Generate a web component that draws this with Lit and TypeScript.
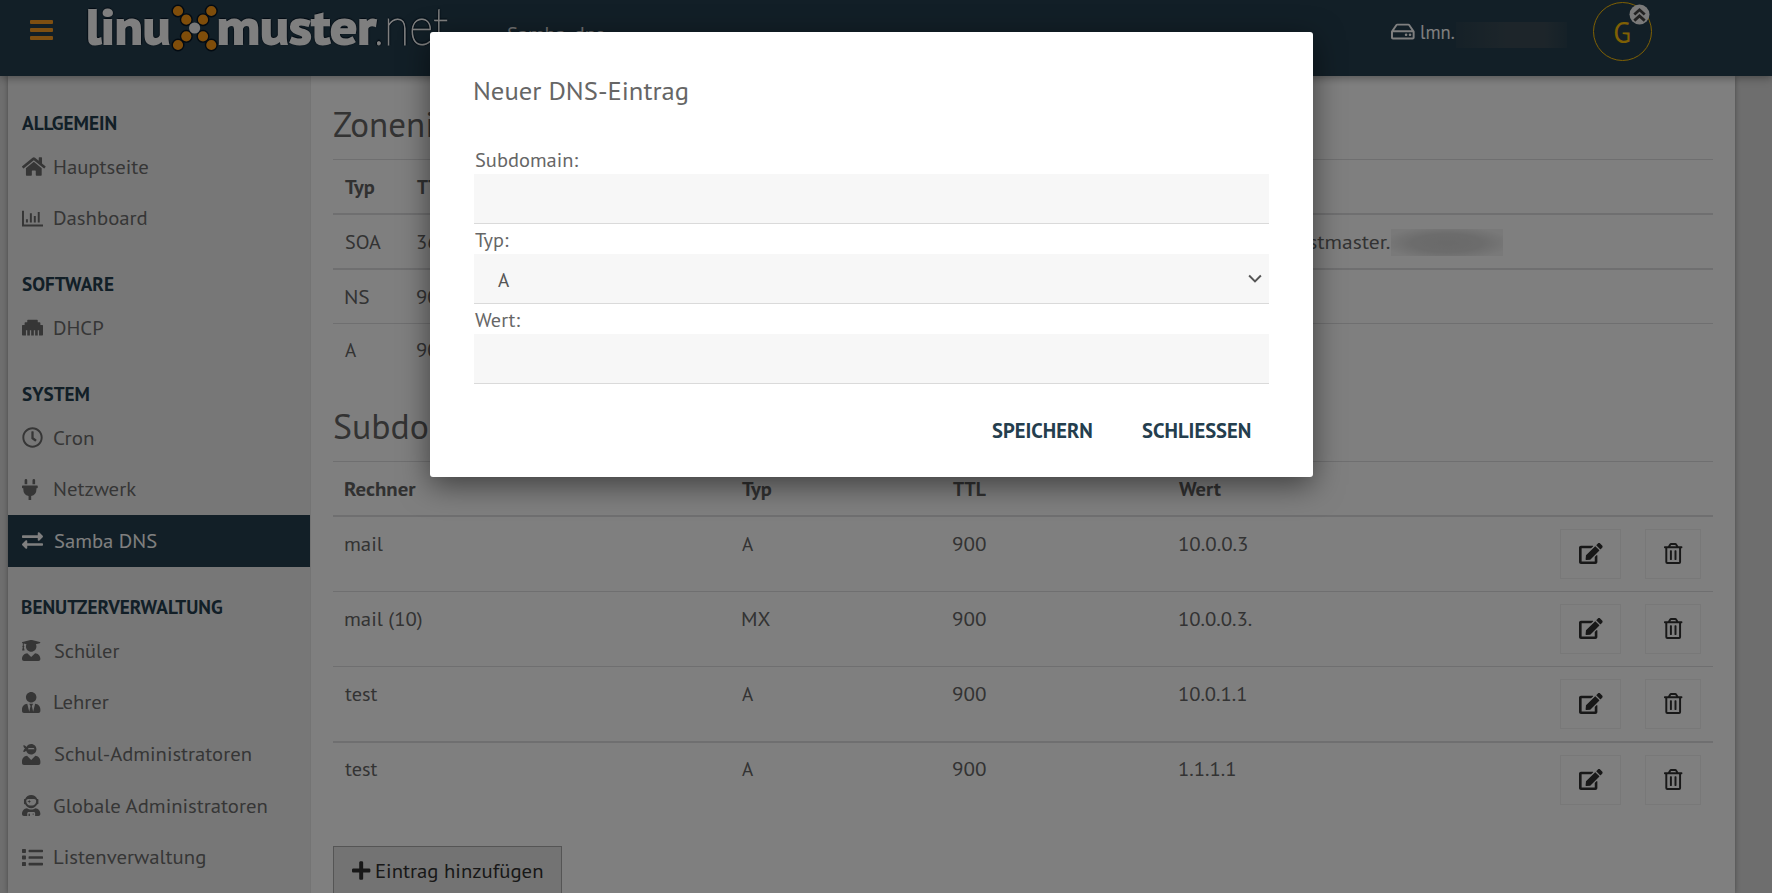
import { LitElement, html, css, svg } from "lit";
import { customElement, property } from "lit/decorators.js";
import { classMap } from "lit/directives/class-map.js";

const user = "0 0 448 512";
const ICONS: Record<string, [string, string]> = {
  home: ["0 0 576 512", "M280.37 148.26L96 300.11V464a16 16 0 0 0 16 16l112.06-.29a16 16 0 0 0 15.92-16V368a16 16 0 0 1 16-16h64a16 16 0 0 1 16 16v95.64a16 16 0 0 0 16 16.05L464 480a16 16 0 0 0 16-16V300L295.67 148.26a12.19 12.19 0 0 0-15.3 0zM571.6 251.47L488 182.56V44.05a12 12 0 0 0-12-12h-56a12 12 0 0 0-12 12v72.61L318.47 43a48 48 0 0 0-61 0L4.34 251.47a12 12 0 0 0-1.6 16.9l25.5 31A12 12 0 0 0 45.15 301l235.22-193.74a12.19 12.19 0 0 1 15.3 0L530.9 301a12 12 0 0 0 16.9-1.6l25.5-31a12 12 0 0 0-1.7-16.93z"],
  chart: ["0 0 512 512", "M0 64h48v336h464v48H0zM96 272h48v80H96zM192 128h48v224h-48zM288 192h48v160h-48zM384 96h48v256h-48z"],
  ethernet: ["0 0 512 512", "M496 192h-48v-48c0-8.8-7.2-16-16-16h-48V80c0-8.8-7.2-16-16-16H144c-8.8 0-16 7.2-16 16v48H80c-8.8 0-16 7.2-16 16v48H16c-8.8 0-16 7.2-16 16v224c0 8.8 7.2 16 16 16h80V320h32v128h64V320h32v128h64V320h32v128h64V320h32v128h80c8.8 0 16-7.2 16-16V208c0-8.8-7.2-16-16-16z"],
  clock: ["0 0 512 512", "M256 8C119 8 8 119 8 256s111 248 248 248 248-111 248-248S393 8 256 8zm0 448c-110.5 0-200-89.5-200-200S145.5 56 256 56s200 89.5 200 200-89.5 200-200 200zm61.8-104.4l-84.9-61.7c-3.1-2.3-4.9-5.9-4.9-9.7V116c0-6.6 5.4-12 12-12h32c6.6 0 12 5.4 12 12v141.7l66.8 48.6c5.4 3.9 6.5 11.4 2.6 16.8L334.6 349c-3.9 5.3-11.4 6.5-16.8 2.6z"],
  plug: ["0 0 384 512", "M320 32a32 32 0 0 0-64 0v96h64zm48 128H16a16 16 0 0 0-16 16v32a16 16 0 0 0 16 16h16v32a160.07 160.07 0 0 0 128 156.8V512h64v-99.2A160.07 160.07 0 0 0 352 256v-32h16a16 16 0 0 0 16-16v-32a16 16 0 0 0-16-16zM128 32a32 32 0 0 0-64 0v96h64z"],
  exchange: ["0 0 512 512", "M0 168v-16c0-13.255 10.745-24 24-24h360V80c0-21.367 25.899-32.042 40.971-16.971l80 80c9.372 9.373 9.372 24.569 0 33.941l-80 80C409.956 271.982 384 261.456 384 240v-48H24c-13.255 0-24-10.745-24-24zm488 152H128v-48c0-21.314-25.862-32.08-40.971-16.971l-80 80c-9.372 9.373-9.372 24.569 0 33.941l80 80C102.057 463.997 128 453.437 128 432v-48h360c13.255 0 24-10.745 24-24v-16c0-13.255-10.745-24-24-24z"],
  graduate: [user, "M319.4 320.6L224 416l-95.4-95.4C57.1 323.7 0 382.2 0 454.4v9.6c0 26.5 21.5 48 48 48h352c26.5 0 48-21.5 48-48v-9.6c0-72.2-57.1-130.7-128.6-133.8zM13.6 79.8l6.4 1.5v58.4c-7 4.2-12 11.5-12 20.3 0 8.4 4.6 15.4 11.1 19.7L3.5 242c-1.7 6.9 2.1 14 7.6 14h41.8c5.5 0 9.3-7.1 7.6-14l-15.6-62.3C51.4 175.4 56 168.4 56 160c0-8.8-5-16.1-12-20.3V87.1l66 15.9c-8.6 17.2-14 36.4-14 57 0 70.7 57.3 128 128 128s128-57.3 128-128c0-20.6-5.3-39.8-14-57l96.3-23.2c18.2-4.4 18.2-27.1 0-31.5l-190.4-46c-13-3.1-26.7-3.1-39.7 0L13.6 48.2c-18.1 4.4-18.1 27.2 0 31.6z"],
  tie: [user, "M224 256c70.7 0 128-57.3 128-128S294.7 0 224 0 96 57.3 96 128s57.3 128 128 128zm95.8 32.6L272 480l-32-136 32-56h-96l32 56-32 136-47.8-191.4C56.9 292 0 350.3 0 422.4V464c0 26.5 21.5 48 48 48h352c26.5 0 48-21.5 48-48v-41.6c0-72.1-56.9-130.4-128.2-133.8z"],
  ninja: [user, "M325.4 289.2L224 390.6 122.6 289.2C54 295.3 0 352.2 0 422.4V464c0 26.5 21.5 48 48 48h352c26.5 0 48-21.5 48-48v-41.6c0-70.2-54-127.1-122.6-133.2zM32 192c27.3 0 51.8-11.5 69.2-29.7 15.1 53.9 64 93.7 122.8 93.7 70.7 0 128-57.3 128-128S294.7 0 224 0c-50.4 0-93.6 29.4-114.5 71.8C92.1 47.8 64 32 32 32c0 33.4 17.1 62.8 43.1 80-26 17.2-43.1 46.6-43.1 80zm144-96h96c17.7 0 32 14.3 32 32H144c0-17.7 14.3-32 32-32z"],
  astronaut: [user, "M64 224h13.5c24.7 56.5 80.9 96 146.5 96s121.8-39.5 146.5-96H384c8.8 0 16-7.2 16-16v-96c0-8.8-7.2-16-16-16h-13.5C345.8 39.5 289.6 0 224 0S102.2 39.5 77.5 96H64c-8.8 0-16 7.2-16 16v96c0 8.8 7.2 16 16 16zm40-88c0-22.1 21.5-40 48-40h144c26.5 0 48 17.9 48 40v24c0 53-43 96-96 96h-48c-53 0-96-43-96-96v-24zm72 72l12-36 36-12-36-12-12-36-12 36-36 12 36 12 12 36zm151.6 113.4C297.7 340.7 262.2 352 224 352s-73.7-11.3-103.6-30.6C52.9 328.5 0 385 0 454.4v9.6c0 26.5 21.5 48 48 48h80v-64c0-17.7 14.3-32 32-32h128c17.7 0 32 14.3 32 32v64h80c26.5 0 48-21.5 48-48v-9.6c0-69.4-52.9-125.9-120.4-133zM272 448c-8.8 0-16 7.2-16 16s7.2 16 16 16 16-7.2 16-16-7.2-16-16-16zm-96 0c-8.8 0-16 7.2-16 16v48h32v-48c0-8.8-7.2-16-16-16z"],
  list: ["0 0 512 512", "M16 48h64q16 0 16 16v64q0 16-16 16H16q-16 0-16-16V64q0-16 16-16zM16 208h64q16 0 16 16v64q0 16-16 16H16q-16 0-16-16v-64q0-16 16-16zM16 368h64q16 0 16 16v64q0 16-16 16H16q-16 0-16-16v-64q0-16 16-16zM176 64h320q16 0 16 16v32q0 16-16 16H176q-16 0-16-16V80q0-16 16-16zM176 224h320q16 0 16 16v32q0 16-16 16H176q-16 0-16-16v-32q0-16 16-16zM176 384h320q16 0 16 16v32q0 16-16 16H176q-16 0-16-16v-32q0-16 16-16z"],
  edit: ["0 0 576 512", "M402.6 83.2l90.2 90.2c3.8 3.8 3.8 10 0 13.8L274.4 405.6l-92.8 10.3c-12.4 1.4-22.9-9.1-21.5-21.5l10.3-92.8L388.8 83.2c3.8-3.8 10-3.8 13.8 0zm162-22.9l-48.8-48.8c-15.2-15.2-39.9-15.2-55.2 0l-35.4 35.4c-3.8 3.8-3.8 10 0 13.8l90.2 90.2c3.8 3.8 10 3.8 13.8 0l35.4-35.4c15.2-15.3 15.2-40 0-55.2zM384 346.2V448H64V128h229.8c3.2 0 6.2-1.3 8.5-3.5l40-40c7.6-7.6 2.2-20.5-8.5-20.5H48C21.5 64 0 85.5 0 112v352c0 26.5 21.5 48 48 48h352c26.5 0 48-21.5 48-48V306.2c0-10.7-12.9-16-20.5-8.5l-40 40c-2.2 2.3-3.5 5.3-3.5 8.5z"],
  trash: [user, "M268 416h24a12 12 0 0 0 12-12V188a12 12 0 0 0-12-12h-24a12 12 0 0 0-12 12v216a12 12 0 0 0 12 12zM432 80h-82.41l-34-56.7A48 48 0 0 0 274.41 0H173.59a48 48 0 0 0-41.16 23.3L98.41 80H16A16 16 0 0 0 0 96v16a16 16 0 0 0 16 16h16v336a48 48 0 0 0 48 48h288a48 48 0 0 0 48-48V128h16a16 16 0 0 0 16-16V96a16 16 0 0 0-16-16zM171.84 50.91A6 6 0 0 1 177 48h94a6 6 0 0 1 5.15 2.91L293.61 80H154.39zM368 464H80V128h288zm-212-48h24a12 12 0 0 0 12-12V188a12 12 0 0 0-12-12h-24a12 12 0 0 0-12 12v216a12 12 0 0 0 12 12z"],
  plus: [user, "M416 208H272V64c0-17.67-14.33-32-32-32h-32c-17.67 0-32 14.33-32 32v144H32c-17.67 0-32 14.33-32 32v32c0 17.67 14.33 32 32 32h144v144c0 17.67 14.33 32 32 32h32c17.67 0 32-14.33 32-32V304h144c17.67 0 32-14.33 32-32v-32c0-17.67-14.33-32-32-32z"],
  hdd: ["0 0 576 512", "M567.403 235.642L462.323 84.589A48 48 0 0 0 422.919 64H153.081a48 48 0 0 0-39.404 20.589L8.597 235.642A48.001 48.001 0 0 0 0 263.054V400c0 26.51 21.49 48 48 48h480c26.51 0 48-21.49 48-48V263.054c0-9.801-3-19.366-8.597-27.412zM153.081 112h269.838l77.913 112H75.168l77.913-112zM528 400H48V272h480v128zm-32-64c0 17.673-14.327 32-32 32s-32-14.327-32-32 14.327-32 32-32 32 14.327 32 32zm-96 0c0 17.673-14.327 32-32 32s-32-14.327-32-32 14.327-32 32-32 32 14.327 32 32z"],
};

const icon = (name: string) =>
  html`<svg class="icon" viewBox=${ICONS[name][0]}><path d=${ICONS[name][1]}></path></svg>`;

/* One line of text, condensed or widened so that its visible glyphs span `w` pixels.
   When `lead` is given, only that leading part is sized to `w`. */
@customElement("fit-text")
class FitText extends LitElement {
  @property() text = "";
  @property() lead = "";
  @property({ type: Number }) w = 0;

  static styles = css`
    :host { display: inline-block; white-space: pre; flex: none; }
    .run { display: inline-block; transform-origin: 0 50%; }
  `;

  firstUpdated() {
    const run = this.renderRoot.querySelector(".run") as HTMLElement;
    const cs = getComputedStyle(run);
    const ctx = document.createElement("canvas").getContext("2d")!;
    ctx.font = `${cs.fontWeight} ${cs.fontSize} ${cs.fontFamily}`;
    const m = ctx.measureText(this.lead || this.text);
    const k = this.w / (m.actualBoundingBoxRight + m.actualBoundingBoxLeft);
    run.style.transform = `translate(${m.actualBoundingBoxLeft * k}px, var(--drop, 0.8px)) scaleX(${k})`;
    this.style.width = `${this.w}px`;
  }

  render() {
    return html`<span class="run">${this.text}</span>`;
  }
}

const t = (text: string, w: number, lead = "") =>
  html`<fit-text .text=${text} .w=${w} .lead=${lead}></fit-text>`;

const NAV: { title: [string, number]; items: [string, string, number, boolean?][] }[] = [
  { title: ["ALLGEMEIN", 94], items: [["home", "Hauptseite", 94.5], ["chart", "Dashboard", 93]] },
  { title: ["SOFTWARE", 91.5], items: [["ethernet", "DHCP", 49.5]] },
  { title: ["SYSTEM", 67], items: [["clock", "Cron", 39.5], ["plug", "Netzwerk", 82.5], ["exchange", "Samba DNS", 102.5, true]] },
  {
    title: ["BENUTZERVERWALTUNG", 200.5],
    items: [["graduate", "Schüler", 65.5], ["tie", "Lehrer", 55], ["ninja", "Schul-Administratoren", 197],
      ["astronaut", "Globale Administratoren", 213.5], ["list", "Listenverwaltung", 151.5]],
  },
];

type Cell = [string, number];
const RECORDS: { cells: Cell[]; thick?: boolean }[] = [
  { cells: [["mail", 38], ["A", 11.5], ["900", 33.5], ["10.0.0.3", 68.5]] },
  { cells: [["mail (10)", 77], ["MX", 28], ["900", 33.5], ["10.0.0.3.", 73]] },
  { cells: [["test", 32.5], ["A", 11.5], ["900", 33.5], ["10.0.1.1", 67.5]], thick: true },
  { cells: [["test", 32.5], ["A", 11.5], ["900", 33.5], ["1.1.1.1", 56.5]] },
];

@customElement("app-root")
class AppRoot extends LitElement {
  static styles = css`
    :host {
      display: block; position: relative; width: 1772px; height: 893px; overflow: hidden;
      background: #dcdcdc; color: #666;
      font: 20px "PT Sans", "Noto Sans", "Open Sans", sans-serif;
    }
    * { box-sizing: border-box; }
    .icon { display: block; flex: none; height: 21px; fill: currentColor; overflow: visible; }

    .top { position: relative; z-index: 1; height: 76px; display: flex; background: #243e4e; color: #fff; box-shadow: 0 2px 8px rgba(0, 0, 0, .35); }
    .burger { display: grid; gap: 4px; width: 23px; height: 20px; margin: 20px 0 0 30px; }
    .burger i { background: #ff9f22; border-radius: 1px; }
    .logo { display: flex; height: 60px; margin-left: 34.5px; line-height: 50px; font-size: 49px; color: #fff; text-shadow: 1.5px 0 1px #041424, -1.5px 0 1px #041424, 0 1.5px 1px #041424, 0 -1.5px 1px #041424; }
    .logo .bold { font-weight: 700; -webkit-text-stroke: 1.8px #fff; }
    .logo .thin { font-family: "Lato", "Noto Sans", sans-serif; font-weight: 200; font-size: 51px; -webkit-text-stroke: .9px #fff; }
    .knot { width: 50.5px; height: 52px; flex: none; }
    .crumb { margin: 19px 0 0 59.5px; line-height: 28px; width: 97px; color: #ddd; }
    .host { display: flex; align-items: center; height: 26px; margin: 18px 0 0 787px; gap: 6.5px; color: #fff; }
    .blur { width: 111px; height: 26px; margin: 22px 0 0 1px; background: linear-gradient(90deg, #2b4250, #3a4b55 45%, #3a4b55 80%, #2b4250); }
    .avatar { position: relative; width: 59px; height: 59px; margin: 2px 0 0 26px; border: 1.3px solid #ffc107; border-radius: 50%; color: #ffc107; font-size: 29px; line-height: 57px; padding-left: 20.5px; }
    .badge { position: absolute; left: 35.5px; top: .5px; width: 21px; height: 21px; }

    .frame { display: flex; width: 1727px; height: 817px; margin-left: 8px; background: #fff; box-shadow: 0 0 5px rgba(0, 0, 0, .35); }
    .side { width: 303px; flex: none; background: #efefef; padding: 6.7px 0 0 0; border-right: 1px solid #e9e9e9; }
    .group { height: 58px; padding: 21px 0 0 14.4px; line-height: 37px; font-weight: 700; color: #243e4e; }
    .entry { --drop: .2px; display: flex; align-items: center; height: 51.7px; padding-left: 14.2px; color: #6c6c6c; }
    .entry.active { background: #243e4e; color: #fff; }
    .mark { width: 32px; flex: none; }

    .main { width: 1380px; margin-left: 22px; }
    .heading { padding-top: 12px; height: 83px; font-size: 34px; line-height: 71px; padding-left: .8px; overflow: hidden; }
    .row { display: grid; height: 53px; line-height: 53px; padding-left: 12px; box-sizing: content-box; width: 1368px; border-bottom: 1px solid #dfdfe0; }
    .zone { grid-template-columns: 72px 1fr; }
    .zone.soa { grid-template-columns: 72px 869px 105px 1fr; align-items: center; }
    .smear { width: 112px; height: 27px; margin-top: 2px; background: radial-gradient(ellipse 58% 62% at 50% 52%, #d4d4d4, #d9d9d9 55%, #f3f3f3); }
    .rec { grid-template-columns: 397px 210.5px 226.8px 380.7px 85px 1fr; }
    .rec.body { height: 74px; }
    .head { border-top: 1px solid #dfdfe0; border-bottom: 2px solid #dfdfe0; font-weight: 700; color: #636363; }
    .thick { border-bottom-width: 2px; }
    .last { border-bottom-color: transparent; --drop: -.3px; }
    .btn { display: flex; align-items: center; justify-content: center; width: 61px; height: 50px; margin-top: 12px; padding-bottom: 1px; border: 1px solid #f0f0f0; color: #303030; }
    .btn.del { width: 56px; }
    .last .btn { margin-top: 11.5px; }
    .add { --drop: 0px; display: flex; align-items: center; width: 229px; height: 52px; margin-top: 28px; padding: 0 0 3px 18px; gap: 6px; border: 1px solid #aaa; background: #e6e6e6; color: #303030; }

    .veil { position: absolute; inset: 0; z-index: 2; background: rgba(0, 0, 0, .5); }
    .dialog { position: absolute; left: 430px; top: 32px; width: 883px; height: 445px; padding: 38px 44px 0; background: #fff; border-radius: 3px; box-shadow: 0 8px 30px rgba(0, 0, 0, .5); color: #666; }
    .title { font-size: 26px; line-height: 40px; margin-bottom: 34px; padding-left: 1.4px; }
    .label { --drop: .5px; height: 30px; line-height: 30px; padding-left: .5px; }
    .field { --drop: .5px; display: flex; justify-content: space-between; height: 50px; line-height: 50px; padding: 0 7px 0 24.2px; background: #f7f7f7; border-bottom: 1px solid #dadada; color: #555; }
    .chev { width: 14px; fill: none; stroke: #555; stroke-width: 2; }
    .actions { display: flex; gap: 49px; justify-content: flex-end; margin-top: 31px; padding-right: 18.5px; line-height: 30px; font-size: 20.4px; font-weight: 700; color: #243e4e; }
  `;

  private dots() {
    const pts = [[9, 11], [17.3, 19.7], [34, 19.7], [42.3, 11], [17.3, 36.3], [9, 45], [34, 36.3], [42.3, 45]];
    return svg`${pts.map(([x, y]) => svg`<circle cx=${x} cy=${y} r="5.8" fill="#ff9a14" stroke="#041424" stroke-width="1.4"></circle>`)}
      <circle cx="25.6" cy="28" r="5.6" fill="#f2f2f2"></circle>`;
  }

  private record(r: { cells: Cell[]; thick?: boolean }, i: number) {
    return html`<div class=${classMap({ row: true, rec: true, body: true, thick: !!r.thick, last: i === 3 })}>
      ${r.cells.map(([s, w]) => html`<div>${t(s, w)}</div>`)}
      <div class="btn">${icon("edit")}</div>
      <div class="btn del">${icon("trash")}</div>
    </div>`;
  }

  render() {
    return html`
      <header class="top">
        <div class="burger"><i></i><i></i><i></i></div>
        <div class="logo">
          <span class="bold">${t("linu", 81)}</span>
          <svg class="knot" viewBox="0 0 50.5 52">${this.dots()}</svg>
          <span class="bold">${t("muster", 158)}</span>
          <span class="thin">${t(".net", 70.5)}</span>
        </div>
        <div class="crumb">${t("Samba_dns", 97)}</div>
        <div class="host">${icon("hdd")}${t("lmn.", 33.5)}</div>
        <div class="blur"></div>
        <div class="avatar">${t("G", 16)}
          <svg class="badge" viewBox="0 0 21 21"><circle cx="10.5" cy="10.5" r="10" fill="#f4f4f4"></circle>
            <path d="M5.3 10.5l5.2-4.7 5.2 4.7M5.3 16.6l5.2-4.7 5.2 4.7" fill="none" stroke="#444" stroke-width="2.8"></path></svg>
        </div>
      </header>

      <div class="frame">
        <nav class="side">
          ${NAV.map((g) => html`
            <div class="group">${t(...g.title)}</div>
            ${g.items.map(([ic, s, w, on]) => html`
              <div class=${classMap({ entry: true, active: !!on })}><span class="mark">${icon(ic)}</span>${t(s, w)}</div>`)}
          `)}
        </nav>
        <main class="main">
          <div class="heading">${t("Zoneninformationen", 89.5, "Zonen")}</div>
          <div class="row zone head"><div>${t("Typ", 30)}</div><div>${t("TTL", 33)}</div></div>
          <div class="row zone soa thick">
            <div>${t("SOA", 36)}</div><div>${t("3600", 44)}</div><div>${t("hostmaster.", 104)}</div><div class="smear"></div>
          </div>
          <div class="row zone"><div>${t("NS", 24)}</div><div>${t("900", 33)}</div></div>
          <div class="row zone last"><div>${t("A", 11.5)}</div><div>${t("900", 33)}</div></div>
          <div class="heading">${t("Subdomains", 93.5, "Subdo")}</div>
          <div class="row rec head">
            <div>${t("Rechner", 70.5)}</div><div>${t("Typ", 30)}</div><div>${t("TTL", 33.5)}</div><div>${t("Wert", 42)}</div>
          </div>
          ${RECORDS.map((r, i) => this.record(r, i))}
          <div class="add">${icon("plus")}${t("Eintrag hinzufügen", 166.5)}</div>
        </main>
      </div>

      <div class="veil">
        <section class="dialog">
          <div class="title">${t("Neuer DNS-Eintrag", 212)}</div>
          <div class="label">${t("Subdomain:", 103.5)}</div>
          <div class="field"></div>
          <div class="label">${t("Typ:", 34)}</div>
          <div class="field">${t("A", 11.5)}<svg class="chev" viewBox="0 0 14 50"><path d="M1 22l6 6 6-6"></path></svg></div>
          <div class="label">${t("Wert:", 45.5)}</div>
          <div class="field"></div>
          <div class="actions">${t("SPEICHERN", 100.5)}${t("SCHLIESSEN", 109)}</div>
        </section>
      </div>
    `;
  }
}
